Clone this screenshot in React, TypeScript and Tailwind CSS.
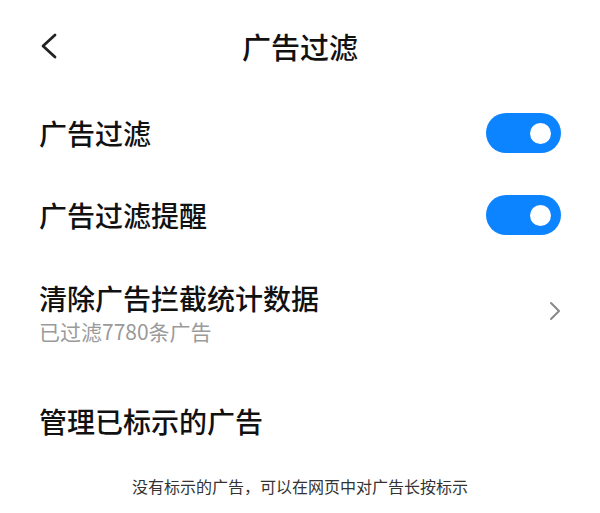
import React from "react";

function Toggle() {
  return (
    <div className="w-[75px] h-[40px] rounded-full bg-[#0d84ff] flex items-center justify-end pr-[10px]">
      <div className="w-[21px] h-[21px] rounded-full bg-white" />
    </div>
  );
}

export default function App() {
  return (
    <div
      className="w-[600px] h-[513px] bg-white overflow-hidden text-[#111]"
      style={{ fontFamily: '"Noto Sans CJK SC", "Noto Sans", sans-serif' }}
    >
      <header className="relative h-[92px] flex items-center justify-center">
        <svg
          className="absolute left-[38px] top-[32px]"
          width="22"
          height="28"
          viewBox="0 0 22 28"
          fill="none"
        >
          <path d="M17 3 L5 14 L17 25" stroke="#222" strokeWidth="2.8" strokeLinecap="round" strokeLinejoin="round" />
        </svg>
        <h1 className="text-[29px] font-medium leading-none">广告过滤</h1>
      </header>

      <div className="h-[82px] flex items-center justify-between pl-[39px] pr-[39px]">
        <span className="text-[28px] font-medium leading-none">广告过滤</span>
        <Toggle />
      </div>

      <div className="h-[82px] flex items-center justify-between pl-[39px] pr-[39px]">
        <span className="text-[28px] font-medium leading-none">广告过滤提醒</span>
        <Toggle />
      </div>

      <div className="h-[110px] flex items-center justify-between pl-[39px] pr-[38px]">
        <div className="flex flex-col gap-[9px] pt-[4px]">
          <span className="text-[28px] font-medium leading-none">清除广告拦截统计数据</span>
          <span className="text-[21px] leading-none text-[#9a9a9a]">已过滤7780条广告</span>
        </div>
        <svg width="14" height="22" viewBox="0 0 14 22" fill="none">
          <path d="M3 3 L11 11 L3 19" stroke="#888" strokeWidth="2" strokeLinecap="round" strokeLinejoin="round" />
        </svg>
      </div>

      <div className="h-[110px] flex items-center pl-[39px]">
        <span className="text-[28px] font-medium leading-none">管理已标示的广告</span>
      </div>

      <p className="text-center text-[16px] leading-[20px] text-[#333]">
        没有标示的广告，可以在网页中对广告长按标示
      </p>
    </div>
  );
}
